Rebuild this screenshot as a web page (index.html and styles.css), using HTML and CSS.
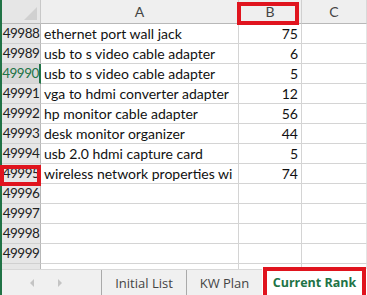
FILE: index.html
```html
<!DOCTYPE html>
<html lang="en">
<head>
    <meta charset="UTF-8">
    <title>Current Rank</title>
    <link rel="stylesheet" href="styles.css">
</head>
<body>
    <div class="page">
        <div class="main">
            <div class="sheet">
                <div class="corner"><span class="tri"></span></div>
                <div class="colhead">A</div>
                <div class="colhead">B</div>
                <div class="colhead last">C</div>

                <div class="rownum">49988</div><div class="cell">ethernet port wall jack</div><div class="cell num">75</div><div class="cell last"></div>
                <div class="rownum">49989</div><div class="cell">usb to s video cable adapter</div><div class="cell num">6</div><div class="cell last"></div>
                <div class="rownum active">49990</div><div class="cell">usb to s video cable adapter</div><div class="cell num">5</div><div class="cell last"></div>
                <div class="rownum">49991</div><div class="cell">vga to hdmi converter adapter</div><div class="cell num">12</div><div class="cell last"></div>
                <div class="rownum">49992</div><div class="cell">hp monitor cable adapter</div><div class="cell num">56</div><div class="cell last"></div>
                <div class="rownum">49993</div><div class="cell">desk monitor organizer</div><div class="cell num">44</div><div class="cell last"></div>
                <div class="rownum">49994</div><div class="cell">usb 2.0 hdmi capture card</div><div class="cell num">5</div><div class="cell last"></div>
                <div class="rownum">49995</div><div class="cell">wireless network properties wi</div><div class="cell num">74</div><div class="cell last"></div>
                <div class="rownum">49996</div><div class="cell"></div><div class="cell"></div><div class="cell last"></div>
                <div class="rownum">49997</div><div class="cell"></div><div class="cell"></div><div class="cell last"></div>
                <div class="rownum">49998</div><div class="cell"></div><div class="cell"></div><div class="cell last"></div>
                <div class="rownum">49999</div><div class="cell"></div><div class="cell"></div><div class="cell last"></div>
                <div class="rownum stub"></div><div class="cell stub"></div><div class="cell stub"></div><div class="cell stub last"></div>
            </div>

            <div class="tabs">
                <div class="nav">
                    <span class="arrow left"></span>
                    <span class="arrow right"></span>
                </div>
                <div class="tab first">Initial List</div>
                <div class="tab">KW Plan</div>
                <div class="tab current">Current Rank</div>
            </div>
        </div>

        <!-- red highlight boxes -->
        <div class="mark mark-col"></div>
        <div class="mark mark-row"></div>
        <div class="mark mark-tab"></div>
    </div>
</body>
</html>
```

FILE: styles.css
```css
* {
    margin: 0;
    padding: 0;
    box-sizing: border-box;
}

body {
    font-family: Lato, 'Liberation Sans', sans-serif;
    background: #fff;
    color: #000;
    overflow: hidden;
}

.page {
    position: relative;
    width: 367px;
    height: 295px;
    overflow: hidden;
}

.main {
    display: flex;
    flex-direction: column;
    height: 100%;
    border-left: 2px solid #217346;
}

.sheet {
    display: grid;
    grid-template-columns: 39px 198px 63px 1fr;
    grid-template-rows: 24px repeat(12, 20px) 5px;
    font-size: 14px;
}

.corner,
.colhead {
    background: #efefef;
    border-right: 1px solid #d0d0d0;
    border-bottom: 1px solid #b8b8b8;
}

.corner {
    position: relative;
    background: #e6e6e6;
    border-right-color: #c8c8c8;
}

.tri {
    position: absolute;
    right: 3px;
    bottom: 3px;
    width: 0;
    height: 0;
    border-left: 13px solid transparent;
    border-bottom: 13px solid #d0d0d0;
}

.colhead {
    text-align: center;
    line-height: 23px;
    color: #444;
    font-size: 14px;
}

.colhead.last {
    border-right-color: #d8d8d8;
}

.rownum {
    background: #e6e6e6;
    border-right: 1px solid #b8b8b8;
    border-bottom: 1px solid #d0d0d0;
    text-align: center;
    line-height: 19px;
    color: #222;
    font-size: 13.5px;
    letter-spacing: -0.5px;
}

.rownum.active {
    background: #d8d8d8;
    color: #217346;
    border-right: 2px solid #217346;
}

.cell {
    border-right: 1px solid #d4d4d4;
    border-bottom: 1px solid #d4d4d4;
    line-height: 19px;
    padding: 0 3px;
    white-space: nowrap;
    overflow: hidden;
    color: #111;
}

.cell.last {
    border-right-color: #e4e4e4;
}

.num {
    text-align: right;
}

.stub {
    border-bottom: none;
}

.tabs {
    flex: 1;
    display: flex;
    background: #f0f0f0;
    border-top: 1px solid #d8d8d8;
    font-family: 'Open Sans', 'Noto Sans', sans-serif;
    font-size: 13px;
    color: #444;
}

.nav {
    width: 99px;
    display: flex;
    align-items: center;
    gap: 24px;
    padding-left: 28px;
}

.arrow {
    width: 0;
    height: 0;
    border-top: 4px solid transparent;
    border-bottom: 4px solid transparent;
}

.arrow.left {
    border-right: 4px solid #c4c4c4;
}

.arrow.right {
    border-left: 4px solid #c4c4c4;
}

.tab {
    display: flex;
    align-items: center;
    justify-content: center;
    padding-top: 1px;
}

.tab.first {
    width: 86px;
    border-left: 1px solid #aaa;
    border-right: 1px solid #aaa;
}

.tab:nth-child(3) {
    width: 75px;
}

.tab.current {
    flex: 1;
    background: #fff;
    margin-top: -1px;
    color: #217346;
    font-weight: bold;
    font-size: 12.5px;
}

.mark {
    position: absolute;
    border: 4px solid #e0141e;
}

.mark-col {
    left: 237px;
    top: 2px;
    width: 62px;
    height: 23px;
}

.mark-row {
    left: 0;
    top: 165px;
    width: 41px;
    height: 21px;
}

.mark-tab {
    left: 263px;
    top: 267px;
    width: 103px;
    height: 32px;
}
```
